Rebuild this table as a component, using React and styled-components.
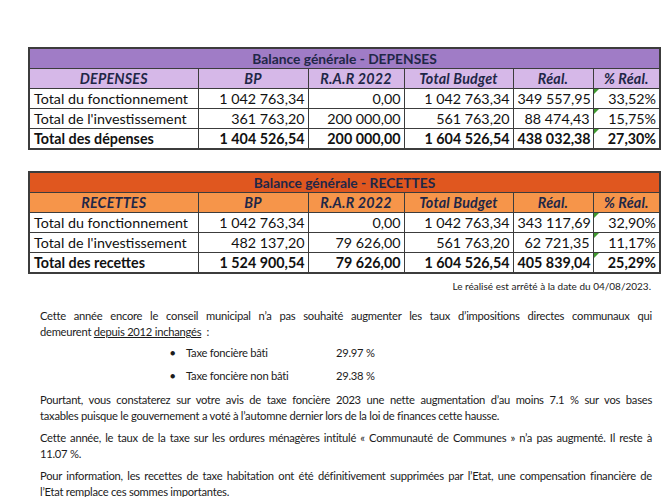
import React from "react";
import styled, { createGlobalStyle, css } from "styled-components";

const Global = createGlobalStyle`
  html, body { margin: 0; padding: 0; background: #fff; }
  body { font-family: Lato, "Open Sans", sans-serif; color: #1a1a1a; }
`;

const Page = styled.div`
  width: 667px;
  height: 497px;
  overflow: hidden;
  padding: 47px 0 0 0;
  box-sizing: border-box;
  position: relative;
`;

const Tables = styled.div`
  display: flex;
  flex-direction: column;
  gap: 21px;
  padding-left: 28px;
`;

const themes = {
  purple: { title: "#a07cc6", head: "#d6b8e8" },
  orange: { title: "#e0571f", head: "#f6954a" },
};

const Table = styled.table`
  border-collapse: collapse;
  width: 631px;
  table-layout: fixed;
  font-family: Lato, sans-serif;
  font-size: 14.3px;
  color: #111;
  border: 2px solid #3c3c3c;
`;

const TitleCell = styled.th`
  height: 19px;
  padding: 0;
  background: ${(p) => themes[p.$tone].title};
  color: #1f2747;
  font-weight: 700;
  font-size: 13.8px;
  text-align: center;
  border-bottom: 1.5px solid #3c3c3c;
`;

const HeadCell = styled.th`
  height: 19px;
  padding: 0 2px;
  background: ${(p) => themes[p.$tone].head};
  color: #1f2747;
  font-weight: 700;
  font-style: italic;
  font-size: 14.3px;
  letter-spacing: 0.2px;
  text-align: center;
  border-left: 1.5px solid #3c3c3c;
  border-bottom: 1.5px solid #3c3c3c;
  white-space: nowrap;
`;

const Cell = styled.td`
  height: 19px;
  padding: 0 3px 0 4px;
  text-align: ${(p) => (p.$left ? "left" : "right")};
  font-weight: ${(p) => (p.$bold ? 700 : 400)};
  border-left: 1.5px solid #3c3c3c;
  border-top: 1.5px solid #3c3c3c;
  white-space: nowrap;
  position: relative;
  ${(p) =>
    p.$flag &&
    css`
      &::before {
        content: "";
        position: absolute;
        left: 0;
        top: 0;
        border-top: 5px solid #3f9a2f;
        border-right: 5px solid transparent;
      }
    `}
`;

const cols = [169, 110, 96, 109, 80, 67];

function Balance({ tone, label, title, rows }) {
  return (
    <Table>
      <colgroup>
        {cols.map((w, i) => (
          <col key={i} style={{ width: w }} />
        ))}
      </colgroup>
      <thead>
        <tr>
          <TitleCell $tone={tone} colSpan={6}>
            {title}
          </TitleCell>
        </tr>
        <tr>
          {[label, "BP", "R.A.R  2022", "Total Budget", "Réal.", "% Réal."].map((h, i) => (
            <HeadCell key={i} $tone={tone}>
              {h}
            </HeadCell>
          ))}
        </tr>
      </thead>
      <tbody>
        {rows.map((r, i) => (
          <tr key={i}>
            {r.map((c, j) => (
              <Cell key={j} $left={j === 0} $bold={i === 2} $flag={j === 5}>
                {c}
              </Cell>
            ))}
          </tr>
        ))}
      </tbody>
    </Table>
  );
}

const Note = styled.div`
  font-family: Lato, sans-serif;
  font-size: 10px;
  color: #222;
  text-align: right;
  padding-right: 16px;
  margin-top: 5px;
  line-height: 14px;
`;

const Body = styled.div`
  font-family: Lato, sans-serif;
  font-size: 11.2px;
  letter-spacing: -0.25px;
  color: #1c1c1c;
  padding: 0 15px 0 40px;
  display: flex;
  flex-direction: column;
`;

const Para = styled.div`
  margin-top: ${(p) => p.$gap || 6}px;
`;

const Line = styled.div`
  line-height: 16px;
  white-space: nowrap;
  text-align: justify;
  text-align-last: ${(p) => (p.$full ? "justify" : "left")};
`;

const U = styled.span`
  text-decoration: underline;
`;

const Bullets = styled.ul`
  list-style: none;
  margin: 5px 0 0 0;
  padding: 0 0 0 130px;
  display: flex;
  flex-direction: column;
  gap: 7px;
`;

const Bullet = styled.li`
  display: grid;
  grid-template-columns: 16px 150px auto;
  line-height: 16px;
`;

const Dot = styled.span`
  font-size: 9px;
`;

export default function App() {
  return (
    <Page>
      <Global />
      <Tables>
        <Balance
          tone="purple"
          label="DEPENSES"
          title="Balance générale - DEPENSES"
          rows={[
            ["Total du fonctionnement", "1 042 763,34", "0,00", "1 042 763,34", "349 557,95", "33,52%"],
            ["Total de l'investissement", "361 763,20", "200 000,00", "561 763,20", "88 474,43", "15,75%"],
            ["Total des dépenses", "1 404 526,54", "200 000,00", "1 604 526,54", "438 032,38", "27,30%"],
          ]}
        />
        <Balance
          tone="orange"
          label="RECETTES"
          title="Balance générale - RECETTES"
          rows={[
            ["Total du fonctionnement", "1 042 763,34", "0,00", "1 042 763,34", "343 117,69", "32,90%"],
            ["Total de l'investissement", "482 137,20", "79 626,00", "561 763,20", "62 721,35", "11,17%"],
            ["Total des recettes", "1 524 900,54", "79 626,00", "1 604 526,54", "405 839,04", "25,29%"],
          ]}
        />
      </Tables>
      <Note>Le réalisé est arrêté à la date du 04/08/2023.</Note>
      <Body>
        <Para $gap={15}>
          <Line $full>
            Cette année encore le conseil municipal n’a pas souhaité augmenter les taux d’impositions directes communaux qui
          </Line>
          <Line>
            demeurent <U>depuis 2012 inchangés</U>&nbsp; :
          </Line>
        </Para>
        <Bullets>
          <Bullet>
            <Dot>●</Dot>
            <span>Taxe foncière bâti</span>
            <span>29.97 %</span>
          </Bullet>
          <Bullet>
            <Dot>●</Dot>
            <span>Taxe foncière non bâti</span>
            <span>29.38 %</span>
          </Bullet>
        </Bullets>
        <Para $gap={8}>
          <Line $full>
            Pourtant, vous constaterez sur votre avis de taxe foncière 2023 une nette augmentation d’au moins 7.1 % sur vos bases
          </Line>
          <Line>taxables puisque le gouvernement a voté à l’automne dernier lors de la loi de finances cette hausse.</Line>
        </Para>
        <Para>
          <Line $full>
            Cette année, le taux de la taxe sur les ordures ménagères intitulé « Communauté de Communes » n’a pas augmenté. Il reste à
          </Line>
          <Line>11.07 %.</Line>
        </Para>
        <Para>
          <Line $full>
            Pour information, les recettes de taxe habitation ont été définitivement supprimées par l’Etat, une compensation financière de
          </Line>
          <Line>l’Etat remplace ces sommes importantes.</Line>
        </Para>
      </Body>
    </Page>
  );
}
